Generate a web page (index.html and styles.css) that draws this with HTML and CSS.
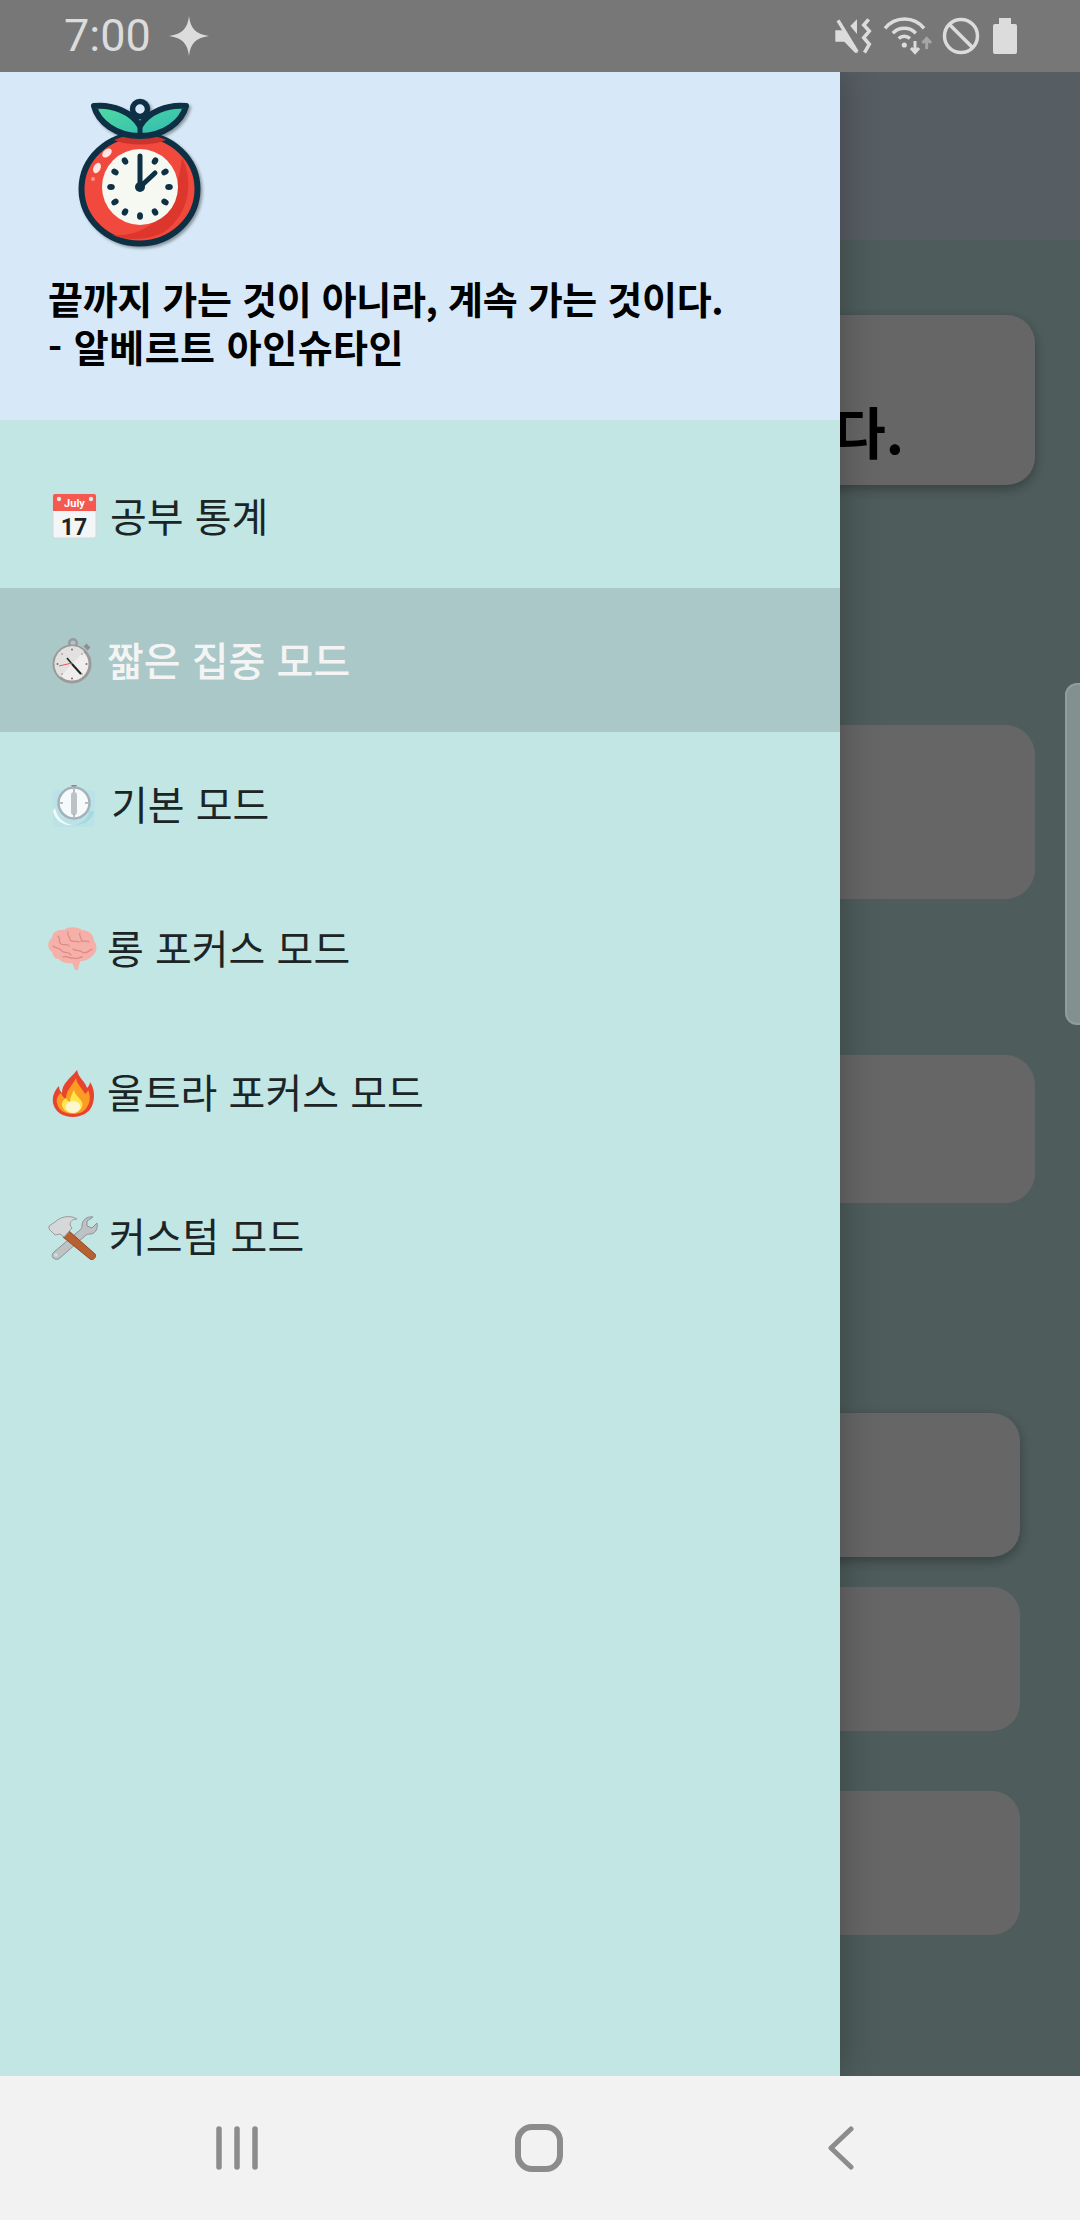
FILE: index.html
```html
<!DOCTYPE html>
<html lang="ko">
<head>
    <meta charset="UTF-8">
    <meta name="viewport" content="width=device-width, initial-scale=1.0">
    <title>공부 타이머</title>
    <link rel="stylesheet" href="styles.css">
</head>
<body>
    <div class="status-bar">
        <span class="clock">7:00</span>
        <svg class="sparkle" viewBox="0 0 40 40"><path d="M20 0 C21.500 12 26 18 40 20 C26 22 21.500 28 20 40 C18.500 28 14 22 0 20 C14 18 18.500 12 20 0Z"/></svg>
        <div class="status-icons">
            <svg class="ic-mute" viewBox="0 0 40 40">
                <path class="solid" d="M2.300 14.300 L10.700 14.300 L24.700 35 L24.700 36.700 L22 36.700 L11.300 25.700 L2.300 25.700Z"/>
                <path class="solid" d="M24 3.300 L24 18 L17.300 10Z"/>
                <path class="line" d="M5 4.300 L24 35.700"/>
                <path class="line" d="M35.700 3.300 L30.700 9 L36.300 15 L30.700 21.700 L36.300 28.300 L31.500 36.700"/>
            </svg>
            <svg class="ic-wifi" viewBox="0 0 52 40">
                <path class="line" d="M4 12.300 A25 25 0 0 1 43 12.300"/>
                <path class="line" d="M11.800 17.200 A16 16 0 0 1 34.800 17.200"/>
                <path class="line" d="M17.700 22.600 A8 8 0 0 1 28.900 22.600"/>
                <circle class="solid" cx="23.300" cy="29" r="2.600"/>
                <path class="line thin" d="M34 25 V36 M30 32 L34 36.500 L38 32"/>
                <path class="line thin dim" d="M45.700 33 V23 M41.500 27 L45.700 22.500 L50 27"/>
            </svg>
            <svg class="ic-block" viewBox="0 0 40 40">
                <circle class="line" cx="20" cy="20" r="16.500"/>
                <path class="line" d="M8.500 8.500 L31.500 31.500"/>
            </svg>
            <svg class="ic-battery" viewBox="0 0 24 36">
                <path class="solid" d="M6 0 H18 V6 H22 Q24 6 24 8 V34 Q24 36 22 36 H2 Q0 36 0 34 V8 Q0 6 2 6 H6Z"/>
            </svg>
        </div>
    </div>

    <div class="stage">
        <div class="page">
            <div class="page-top"></div>
            <div class="card card-quote"><p class="quote-text">계속 가는 것이다.</p></div>
            <div class="card card-a"></div>
            <div class="card card-b"></div>
            <div class="card card-small card-c"></div>
            <div class="card card-small card-d"></div>
            <div class="card card-small card-e"></div>
        </div>
        <div class="scrim"></div>
        <div class="scroll-thumb"></div>

        <div class="drawer">
            <div class="drawer-head">
                <svg class="logo" viewBox="0 0 150 160">
                    <defs>
                        <linearGradient id="leaf" x1="0" y1="0" x2="1" y2="1">
                            <stop offset="0" stop-color="#52dba0"/>
                            <stop offset="1" stop-color="#2fb9b4"/>
                        </linearGradient>
                    </defs>
                    <ellipse cx="79.500" cy="97" rx="58" ry="54.500" fill="#f2493e" stroke="#0d3044" stroke-width="6"/>
                    <path d="M122 66 C134 88 130 122 104 140 C92 147 70 150 52 143 C86 146 116 122 122 66Z" fill="#dd372d"/>
                    <path d="M54 48 C68 41 92 41 106 48 C92 54 68 54 54 48Z" fill="#c9352c"/>
                    <ellipse cx="47" cy="61" rx="5.500" ry="3.500" transform="rotate(-40 47 61)" fill="#ffe6e2"/>
                    <ellipse cx="37" cy="76" rx="3.500" ry="5.500" transform="rotate(25 37 76)" fill="#ffe6e2"/>
                    <circle cx="33" cy="87" r="2" fill="#f8958c"/>
                    <circle cx="80" cy="95" r="38" fill="#f6f9f2"/>
                    <g fill="#0d3044">
                        <ellipse cx="95" cy="69" rx="3" ry="3.800" transform="rotate(30 95 69)"/>
                        <ellipse cx="105" cy="80" rx="3" ry="3.800" transform="rotate(60 105 80)"/>
                        <ellipse cx="109" cy="95" rx="3" ry="3.800" transform="rotate(90 109 95)"/>
                        <ellipse cx="105" cy="110" rx="3" ry="3.800" transform="rotate(120 105 110)"/>
                        <ellipse cx="95" cy="120" rx="3" ry="3.800" transform="rotate(150 95 120)"/>
                        <ellipse cx="80" cy="124" rx="3" ry="3.800"/>
                        <ellipse cx="65" cy="120" rx="3" ry="3.800" transform="rotate(30 65 120)"/>
                        <ellipse cx="55" cy="110" rx="3" ry="3.800" transform="rotate(60 55 110)"/>
                        <ellipse cx="51" cy="95" rx="3" ry="3.800" transform="rotate(90 51 95)"/>
                        <ellipse cx="55" cy="80" rx="3" ry="3.800" transform="rotate(120 55 80)"/>
                        <ellipse cx="65" cy="69" rx="3" ry="3.800" transform="rotate(150 65 69)"/>
                    </g>
                    <path d="M80 95 V64 M80 95 L95 81" fill="none" stroke="#0d3044" stroke-width="5" stroke-linecap="round"/>
                    <circle cx="80" cy="95" r="5" fill="#0d3044"/>
                    <circle cx="80" cy="17" r="7.500" fill="#d7e9f8" stroke="#0d3044" stroke-width="5.500"/>
                    <path d="M34 14 C52 12 72 20 80 34 C88 20 108 12 126 14 C122 30 104 44 80 44 C56 44 38 30 34 14Z" fill="url(#leaf)" stroke="#0d3044" stroke-width="6" stroke-linejoin="round"/>
                    <path d="M80 33 V44" stroke="#0d3044" stroke-width="5"/>
                </svg>
                <p class="head-line head-line-quote">끝까지 가는 것이 아니라, 계속 가는 것이다.</p>
                <p class="head-line head-line-author">- 알베르트 아인슈타인</p>
            </div>

            <ul class="menu">
                <li class="menu-item">
                    <svg class="emoji gap-4" viewBox="0 0 52 52">
                        <rect x="7" y="4" width="43" height="44" rx="2" fill="#f3f6f7" stroke="#d4d8d9" stroke-width="1"/>
                        <path d="M7 6 Q7 4 9 4 H48 Q50 4 50 6 V21 H7Z" fill="#f4584e"/>
                        <circle cx="13" cy="9" r="2.200" fill="#e3e6e7"/>
                        <circle cx="45" cy="9" r="2.200" fill="#e3e6e7"/>
                        <text class="cal-month" x="28.500" y="17">July</text>
                        <text class="cal-day" x="28" y="45">17</text>
                    </svg>
                    <span>공부 통계</span>
                </li>
                <li class="menu-item is-active">
                    <svg class="emoji gap-1" viewBox="0 0 52 52">
                        <circle cx="27" cy="9" r="3.800" fill="none" stroke="#9a9a9a" stroke-width="2.500"/>
                        <path d="M39 11 L43 15" stroke="#8f8f8f" stroke-width="4"/>
                        <path d="M27 12 V16" stroke="#9a9a9a" stroke-width="4"/>
                        <circle cx="26" cy="30" r="18" fill="#f0eeec" stroke="#9c9a99" stroke-width="3"/>
                        <path d="M26 12 A18 18 0 0 0 14 43 L38 17 A18 18 0 0 0 26 12Z" fill="#e3e1df"/>
                        <g fill="#77706c">
                            <circle cx="26" cy="15.500" r="1"/>
                            <circle cx="40.500" cy="30" r="1"/>
                            <circle cx="26" cy="44.500" r="1"/>
                            <circle cx="11.500" cy="30" r="1"/>
                            <circle cx="36" cy="20" r=".7"/>
                            <circle cx="36" cy="40" r=".7"/>
                            <circle cx="16" cy="20" r=".7"/>
                            <circle cx="16" cy="40" r=".7"/>
                        </g>
                        <path d="M26 30 L35 40" stroke="#222" stroke-width="2"/>
                        <path d="M26 30 L21 24" stroke="#222" stroke-width="1.600"/>
                        <path d="M26 29 L13 32" stroke="#ef5350" stroke-width="1"/>
                    </svg>
                    <span>짧은 집중 모드</span>
                </li>
                <li class="menu-item">
                    <svg class="emoji gap-5" viewBox="0 0 52 52">
                        <rect x="7" y="12" width="42" height="37" rx="4" fill="#bbe3e7"/>
                        <path d="M9 30 C11 40 18 46 27 47 C18 48 9 43 7 33Z" fill="#f2fafb"/>
                        <path d="M43 33 C42 41 36 45 29 47 C38 47 47 42 48 33Z" fill="#a8d8e0"/>
                        <path d="M25 7 H31 L28 11Z" fill="#f4584e"/>
                        <circle cx="28" cy="25" r="15.500" fill="#f7fafb" stroke="#a3b1bb" stroke-width="2.500"/>
                        <rect x="25" y="14" width="6" height="23" rx="3" fill="#bcc2c6"/>
                        <g stroke="#8e99a1" stroke-width="1.200">
                            <path d="M28 11 V14"/>
                            <path d="M28 36 V39"/>
                            <path d="M14 25 H17"/>
                            <path d="M39 25 H42"/>
                        </g>
                    </svg>
                    <span>기본 모드</span>
                </li>
                <li class="menu-item">
                    <svg class="emoji gap-1" viewBox="0 0 52 52">
                        <path d="M6 30 C1 27 1 19 6 16 C6 10 13 7 18 8 C23 4 32 5 36 8 C43 8 48 13 48 19 C52 23 51 31 46 34 C43 38 38 39 35 39 C33 41 33 44 32 48 L29 48 C28 45 27 42 26 41 C20 42 15 40 13 37 C9 37 7 34 6 30Z" fill="#f5b0a9"/>
                        <g fill="none" stroke="#e08a84" stroke-width="1.300" stroke-linecap="round">
                            <path d="M12 14 C15 17 12 20 15 22 C18 24 21 21 23 24"/>
                            <path d="M22 10 C20 14 25 15 24 18 C27 21 31 18 33 20"/>
                            <path d="M34 11 C32 14 37 16 35 19 C38 20 41 18 43 20"/>
                            <path d="M7 24 C10 27 14 25 16 29 C19 32 23 29 25 33"/>
                            <path d="M27 27 C30 30 34 27 36 30 C39 33 43 29 46 27"/>
                            <path d="M17 35 C21 33 24 37 28 36 C31 38 33 35 36 35"/>
                        </g>
                    </svg>
                    <span>롱 포커스 모드</span>
                </li>
                <li class="menu-item">
                    <svg class="emoji gap-1" viewBox="0 0 52 52">
                        <path d="M31 4 C33 13 39 15 41 22 C43 20 44 18 44 16 C49 23 49 33 46 40 C43 47 35 51 27 51 C17 51 9 46 7 37 C6 30 9 24 13 20 C13 23 14 25 16 27 C16 17 24 13 31 4Z" fill="#e8432c"/>
                        <path d="M30 12 C31 19 37 23 39 28 C41 27 42 25 42 24 C45 30 44 37 41 41 C38 46 33 48 27 48 C19 48 12 44 11 37 C10 33 12 29 15 27 C16 30 18 32 20 33 C20 24 26 20 30 12Z" fill="#fb9c24"/>
                        <path d="M28 24 C29 29 34 32 36 36 C38 41 33 47 27 47 C20 47 15 42 16 37 C17 34 19 33 20 32 C21 34 22 35 24 36 C24 31 26 28 28 24Z" fill="#fde74d"/>
                        <ellipse cx="27" cy="41" rx="7.500" ry="6" fill="#fdf6cf"/>
                    </svg>
                    <span>울트라 포커스 모드</span>
                </li>
                <li class="menu-item">
                    <svg class="emoji gap-3" viewBox="0 0 52 52">
                        <path d="M47 7 C41 6 36 10 36 16 C36 18 35 19 34 20 L8 42 C5 45 6 48 9 49 C11 50 13 49 15 47 L40 25 C42 24 43 24 45 24 C50 23 52 18 51 13 L46 18 L41 16 L41 11Z" fill="#bfc2c4" stroke="#8e9193" stroke-width="1"/>
                        <circle cx="10" cy="45" r="1.800" fill="#c2e6e3"/>
                        <path d="M23 21 L49 44 C51 47 47 51 44 49 L17 27Z" fill="#b8602f" stroke="#8e4a24" stroke-width="1"/>
                        <path d="M3 16 L9 12 C15 6 25 5 31 9 C26 9 24 12 24 15 L26 18 L18 27 L14 24 L9 25 L3 19Z" fill="#d5d7d8" stroke="#9a9c9e" stroke-width="1"/>
                    </svg>
                    <span>커스텀 모드</span>
                </li>
            </ul>
        </div>
    </div>

    <div class="nav-bar">
        <svg class="nav-recent" viewBox="0 0 42 44"><path d="M3 3 V41 M21 3 V41 M39 3 V41"/></svg>
        <svg class="nav-home" viewBox="0 0 48 48"><rect x="3" y="3" width="42" height="42" rx="14"/></svg>
        <svg class="nav-back" viewBox="0 0 26 44"><path d="M23 3 L3 22 L23 41"/></svg>
    </div>
</body>
</html>
```

FILE: styles.css
```css
body{
    margin: 0;
    width: 1080px;
    height: 2220px;
    display: flex;
    flex-direction: column;
    overflow: hidden;
    font-family: "Noto Sans CJK KR", "Noto Sans", sans-serif;
}
p{
    margin: 0;
}

/* status bar */
.status-bar{
    height: 72px;
    flex-shrink: 0;
    display: flex;
    align-items: center;
    padding-left: 64px;
    background-color: #777777;
    position: relative;
    z-index: 3;
}
.clock{
    font-family: Roboto, sans-serif;
    font-size: 45px;
    color: #dcdcdc;
    line-height: 72px;
}
.sparkle{
    width: 40px;
    height: 40px;
    margin-left: 18px;
    fill: #dcdcdc;
}
.status-icons{
    margin-left: auto;
    margin-right: 63px;
    display: flex;
    align-items: center;
    gap: 8px;
}
.status-icons .solid{
    fill: #dcdcdc;
}
.status-icons .line{
    fill: none;
    stroke: #dcdcdc;
    stroke-width: 3.5;
}
.status-icons .thin{
    stroke-width: 3;
}
.status-icons .dim{
    stroke: #a6a6a6;
}
.ic-mute, .ic-block{
    width: 40px;
    height: 40px;
}
.ic-wifi{
    width: 52px;
    height: 40px;
}
.ic-battery{
    width: 24px;
    height: 36px;
    margin-left: 4px;
}

/* page behind the drawer */
.stage{
    flex: 1;
    position: relative;
    overflow: hidden;
}
.page{
    height: 100%;
    background-color: #c3e6e6;
    overflow: hidden;
}
.page-top{
    height: 168px;
    background-color: #d7e9f8;
}
.card{
    margin: 0 45px;
    background-color: #ffffff;
    border-radius: 30px;
}
.card-small{
    margin: 0 60px;
    height: 144px;
    border-radius: 28px;
}
.card-quote{
    margin-top: 75px;
    height: 170px;
    border-radius: 28px;
    display: flex;
    align-items: flex-end;
    justify-content: flex-end;
    padding-right: 131px;
    padding-bottom: 20px;
    box-sizing: border-box;
    box-shadow: 0 4px 12px rgba(0, 0, 0, 0.3);
}
.quote-text{
    font-size: 56px;
    font-weight: 700;
    line-height: 70px;
    color: #000000;
    white-space: nowrap;
}
.card-a{
    margin-top: 240px;
    height: 174px;
}
.card-b{
    margin-top: 156px;
    height: 148px;
}
.card-c{
    margin-top: 210px;
    box-shadow: 0 4px 12px rgba(0, 0, 0, 0.3);
}
.card-d{
    margin-top: 30px;
}
.card-e{
    margin-top: 60px;
}
.scrim{
    position: absolute;
    inset: 0;
    background-color: rgba(0, 0, 0, 0.6);
}
.scroll-thumb{
    position: absolute;
    top: 611px;
    left: 1065px;
    width: 30px;
    height: 342px;
    box-sizing: border-box;
    background-color: #829090;
    border: 2px solid #929c9c;
    border-radius: 12px;
}

/* drawer */
.drawer{
    position: absolute;
    top: 0;
    left: 0;
    bottom: 0;
    width: 840px;
    background-color: #c2e6e3;
    box-shadow: 0 0 36px rgba(0, 0, 0, 0.28);
}
.drawer-head{
    height: 348px;
    box-sizing: border-box;
    padding: 20px 0 0 48px;
    background-color: #d7e9f8;
}
.logo{
    display: block;
    width: 150px;
    height: 160px;
    margin-left: 12px;
    margin-bottom: 22px;
    filter: drop-shadow(2px 2px 1.5px rgba(0, 0, 0, 0.35));
}
.head-line{
    font-size: 38px;
    font-weight: 700;
    line-height: 48px;
    color: #000000;
    white-space: nowrap;
}
.head-line-quote{
    letter-spacing: -0.3px;
}
.head-line-author{
    letter-spacing: 0.5px;
}
.menu{
    list-style: none;
    margin: 0;
    padding: 24px 0 0;
}
.menu-item{
    height: 144px;
    display: flex;
    align-items: center;
    gap: 8px;
    padding-left: 46px;
    font-size: 40px;
    color: #1c2526;
}
.menu-item span{
    margin-bottom: 3px;
}
.menu-item.is-active{
    background-color: #a9c8c7;
    color: #f4f4f4;
    font-weight: 500;
}
.emoji{
    width: 52px;
    height: 52px;
    flex-shrink: 0;
}
.gap-1{
    margin-right: 1px;
}
.gap-3{
    margin-right: 3px;
}
.gap-4{
    margin-right: 4px;
}
.gap-5{
    margin-right: 5px;
}
.cal-month{
    font-family: Roboto, sans-serif;
    font-size: 11px;
    font-weight: 700;
    fill: #ffffff;
    text-anchor: middle;
}
.cal-day{
    font-family: Roboto, sans-serif;
    font-size: 23px;
    font-weight: 700;
    fill: #1e2326;
    text-anchor: middle;
}

/* bottom nav */
.nav-bar{
    height: 144px;
    flex-shrink: 0;
    display: flex;
    align-items: center;
    padding-left: 216px;
    background-color: #f2f2f2;
    position: relative;
    z-index: 3;
}
.nav-bar svg{
    fill: none;
    stroke: #8c8c8c;
    stroke-linecap: round;
    stroke-linejoin: round;
}
.nav-recent{
    width: 42px;
    height: 44px;
    stroke-width: 5.5;
}
.nav-home{
    width: 48px;
    height: 48px;
    margin-left: 257px;
    stroke-width: 6;
}
.nav-back{
    width: 26px;
    height: 44px;
    margin-left: 265px;
    stroke-width: 5;
}
```
